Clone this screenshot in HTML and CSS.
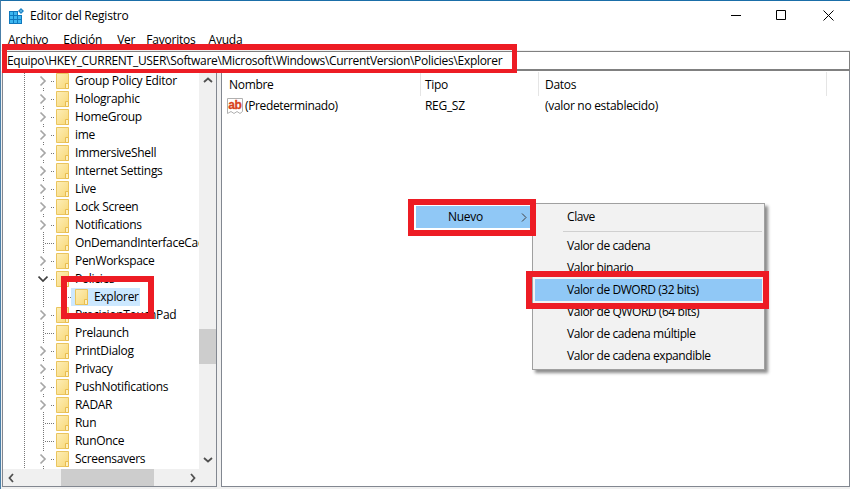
FILE: index.html
```html
<!DOCTYPE html>
<html lang="es">
<head>
<meta charset="utf-8">
<title>Editor del Registro</title>
<link rel="stylesheet" href="styles.css">
</head>
<body>
<svg class="defs" width="0" height="0">
  <linearGradient id="fg" x1="0" y1="0" x2="1" y2="1"><stop offset="0" stop-color="#fdeeb8"/><stop offset="1" stop-color="#f8d877"/></linearGradient>
  <symbol id="folder" viewBox="0 0 13 16">
    <path d="M.5 .5H12.500V15.500H.5Z" fill="url(#fg)" stroke="#eac55f"/>
    <path d="M9.500 10.500H12.500V15.500H9.500Z" fill="#fdf0c0" stroke="#e8bd50"/>
  </symbol>
  <symbol id="chev" viewBox="0 0 10 10">
    <path d="M2.500 .5L7 5L2.500 9.500" fill="none" stroke="#a6a6a6" stroke-width="1.700"/>
  </symbol>
  <symbol id="chevd" viewBox="0 0 10 10">
    <path d="M.5 2.500L5 7L9.500 2.500" fill="none" stroke="#404040" stroke-width="1.700"/>
  </symbol>
</svg>
<div class="window">
  <header class="titlebar">
    <svg class="appicon" width="16" height="16" viewBox="0 0 16 16">
      <path d="M0 3h13v13H0z" fill="#0f78bd"/>
      <path d="M1 4h3v3H1zM5 4h3v3H5zM1 8h3v3H1zM5 8h3v3H5zM9 8h3v3H9zM1 12h3v3H1zM5 12h3v3H5zM9 12h3v3H9z" fill="#3cb6f0"/>
      <path d="M9 3h4v4H9z" fill="#fff"/>
      <path d="M12 0l3 3-3 3-3-3z" fill="#1f86c8"/>
      <path d="M12 2l1 1-1 1-1-1z" fill="#8fd6f8"/>
    </svg>
    <span class="title">Editor del Registro</span>
    <div class="controls">
      <svg width="11" height="11" viewBox="0 0 11 11"><path d="M0 5.500H10" stroke="#000" fill="none"/></svg>
      <svg width="11" height="11" viewBox="0 0 11 11"><path d="M.5 .5H9.500V9.500H.5Z" stroke="#000" fill="none"/></svg>
      <svg width="11" height="11" viewBox="0 0 11 11"><path d="M.5 .5L10.500 10.500M10.500 .5L.5 10.500" stroke="#000" fill="none"/></svg>
    </div>
  </header>
  <nav class="menubar">
    <span>Archivo</span><span>Edición</span><span class="narrow">Ver</span><span class="fav">Favoritos</span><span>Ayuda</span>
  </nav>
  <div class="address">Equipo\HKEY_CURRENT_USER\Software\Microsoft\Windows\CurrentVersion\Policies\Explorer</div>
  <main class="panes">
    <section class="treepane">
      <div class="tree">
        <div class="row"><svg class="tw"><use href="#chev"/></svg><i class="dots"></i><svg class="fo"><use href="#folder"/></svg><span>Group Policy Editor</span></div>
        <div class="row"><svg class="tw"><use href="#chev"/></svg><i class="dots"></i><svg class="fo"><use href="#folder"/></svg><span>Holographic</span></div>
        <div class="row"><svg class="tw"><use href="#chev"/></svg><i class="dots"></i><svg class="fo"><use href="#folder"/></svg><span>HomeGroup</span></div>
        <div class="row"><svg class="tw"><use href="#chev"/></svg><i class="dots"></i><svg class="fo"><use href="#folder"/></svg><span>ime</span></div>
        <div class="row"><svg class="tw"><use href="#chev"/></svg><i class="dots"></i><svg class="fo"><use href="#folder"/></svg><span>ImmersiveShell</span></div>
        <div class="row"><svg class="tw"><use href="#chev"/></svg><i class="dots"></i><svg class="fo"><use href="#folder"/></svg><span>Internet Settings</span></div>
        <div class="row"><svg class="tw"><use href="#chev"/></svg><i class="dots"></i><svg class="fo"><use href="#folder"/></svg><span>Live</span></div>
        <div class="row"><svg class="tw"><use href="#chev"/></svg><i class="dots"></i><svg class="fo"><use href="#folder"/></svg><span>Lock Screen</span></div>
        <div class="row"><svg class="tw"><use href="#chev"/></svg><i class="dots"></i><svg class="fo"><use href="#folder"/></svg><span>Notifications</span></div>
        <div class="row leaf"><i class="tw"></i><i class="dots"></i><svg class="fo"><use href="#folder"/></svg><span class="clip">OnDemandInterfaceCac</span></div>
        <div class="row"><svg class="tw"><use href="#chev"/></svg><i class="dots"></i><svg class="fo"><use href="#folder"/></svg><span>PenWorkspace</span></div>
        <div class="row"><svg class="tw"><use href="#chevd"/></svg><i class="dots"></i><svg class="fo"><use href="#folder"/></svg><span>Policies</span></div>
        <div class="row child"><i class="dots"></i><div class="sel"><svg class="fo"><use href="#folder"/></svg><span>Explorer</span></div></div>
        <div class="row"><svg class="tw"><use href="#chev"/></svg><i class="dots"></i><svg class="fo"><use href="#folder"/></svg><span>PrecisionTouchPad</span></div>
        <div class="row leaf"><i class="tw"></i><i class="dots"></i><svg class="fo"><use href="#folder"/></svg><span>Prelaunch</span></div>
        <div class="row"><svg class="tw"><use href="#chev"/></svg><i class="dots"></i><svg class="fo"><use href="#folder"/></svg><span>PrintDialog</span></div>
        <div class="row"><svg class="tw"><use href="#chev"/></svg><i class="dots"></i><svg class="fo"><use href="#folder"/></svg><span>Privacy</span></div>
        <div class="row"><svg class="tw"><use href="#chev"/></svg><i class="dots"></i><svg class="fo"><use href="#folder"/></svg><span>PushNotifications</span></div>
        <div class="row"><svg class="tw"><use href="#chev"/></svg><i class="dots"></i><svg class="fo"><use href="#folder"/></svg><span>RADAR</span></div>
        <div class="row leaf"><i class="tw"></i><i class="dots"></i><svg class="fo"><use href="#folder"/></svg><span>Run</span></div>
        <div class="row leaf"><i class="tw"></i><i class="dots"></i><svg class="fo"><use href="#folder"/></svg><span>RunOnce</span></div>
        <div class="row"><svg class="tw"><use href="#chev"/></svg><i class="dots"></i><svg class="fo"><use href="#folder"/></svg><span>Screensavers</span></div>
        <div class="row"><i class="tw"></i><i class="dots"></i><svg class="fo"><use href="#folder"/></svg></div>
      </div>
      <div class="vscroll">
        <svg width="10" height="6" viewBox="0 0 10 6"><path d="M1 5L5 1.500L9 5" fill="none" stroke="#505050" stroke-width="1.800"/></svg>
        <div class="vtrack"><div class="vthumb"></div></div>
        <svg width="10" height="6" viewBox="0 0 10 6"><path d="M1 1L5 4.500L9 1" fill="none" stroke="#505050" stroke-width="1.800"/></svg>
      </div>
      <div class="hscroll">
        <svg width="6" height="10" viewBox="0 0 6 10"><path d="M5 1L1.500 5L5 9" fill="none" stroke="#505050" stroke-width="1.800"/></svg>
        <div class="hthumb"></div>
        <svg width="6" height="10" viewBox="0 0 6 10"><path d="M1 1L4.500 5L1 9" fill="none" stroke="#505050" stroke-width="1.800"/></svg>
      </div>
    </section>
    <section class="listpane">
      <div class="listhead">
        <span class="c1">Nombre</span><span class="c2">Tipo</span><span class="c3">Datos</span><i class="c4"></i>
      </div>
      <div class="listrow">
        <span class="c1 name">
          <svg width="17" height="17" viewBox="0 0 17 17">
            <path d="M.5 .5H15.500V13.500L13 15.500L10 13.500L7 15.500L4 13.500L.5 15.500Z" fill="#fff" stroke="#b0b0b0"/>
            <text x="1.200" y="11" class="ab">ab</text>
          </svg><span>(Predeterminado)</span>
        </span>
        <span class="c2">REG_SZ</span>
        <span class="c3">(valor no establecido)</span>
      </div>
    </section>
  </main>
</div>
<div class="menu">
  <div class="parent"><span>Nuevo</span><svg width="6" height="9" viewBox="0 0 6 9"><path d="M1 .5L5 4.500L1 8.500" fill="none" stroke="#404040"/></svg></div>
</div>
<div class="submenu">
  <div class="item">Clave</div>
  <div class="sep"></div>
  <div class="item">Valor de cadena</div>
  <div class="item">Valor binario</div>
  <div class="item active">Valor de DWORD (32 bits)</div>
  <div class="item">Valor de QWORD (64 bits)</div>
  <div class="item">Valor de cadena múltiple</div>
  <div class="item">Valor de cadena expandible</div>
</div>
<div class="mark mark-address"></div>
<div class="mark mark-explorer"></div>
<div class="mark mark-nuevo"></div>
<div class="mark mark-dword"></div>
</body>
</html>
```
FILE: styles.css
```css
* { box-sizing: border-box; }
html, body { margin: 0; padding: 0; }
body {
  width: 850px; height: 489px; overflow: hidden; position: relative;
  background: #fff; color: #000;
  font: 12px/18px "Open Sans", "Noto Sans", sans-serif;
}
span, .address { letter-spacing: -.3px; }
.item { letter-spacing: -.43px; }
.title, .menubar span { letter-spacing: -.22px; }
.defs { position: absolute; }
.window { width: 850px; height: 489px; display: flex; flex-direction: column; border-top: 1px solid #1a6ea8; border-left: 1px solid #4a7fa8; }
.titlebar { height: 29px; display: flex; align-items: center; padding-left: 8px; background: #fff; flex: none; }
.appicon { margin-right: 5px; }
.title { font-size: 12px; }
.controls { margin-left: auto; display: flex; gap: 36px; padding-right: 16px; align-items: center; }
.controls svg:first-child { margin-right: -2px; }
.menubar { height: 21px; display: flex; gap: 15px; padding-left: 7px; padding-top: 1px; background: #fff; flex: none; border-bottom: 1px solid #f0f0f0; }
.menubar .narrow { margin-right: -4px; }
.menubar .fav { margin-right: -2px; }
.address { height: 20px; margin-left: 1px; padding: 0 0 0 4px; border: 1px solid #808080; border-bottom-width: 2px; line-height: 17px; white-space: nowrap; flex: none; }
.panes { flex: 1; display: flex; gap: 4px; min-height: 0; background: #f0f0f0; padding-left: 1px; padding-bottom: 2px; }
.treepane { width: 215px; border: solid #828790; border-width: 0 1px 1px 1px; display: grid; grid-template-columns: 1fr 17px; grid-template-rows: 1fr 17px; min-height: 0; }
.tree {
  overflow: hidden; padding-top: 1px; background-color: #fff; min-width: 0;
  background-image: repeating-linear-gradient(#777 0 1px, transparent 1px 2px);
  background-size: 1px 100%; background-position: 21px 0; background-repeat: no-repeat;
}
.row {
  height: 18px; display: flex; align-items: center; padding-left: 35px; white-space: nowrap;
  background: repeating-linear-gradient(#777 0 1px, transparent 1px 2px) 40px 0 / 1px 100% no-repeat;
}
.tw { width: 10px; height: 10px; flex: none; }
svg.tw { height: 14px; background: #fff; }
.dots { width: 4px; height: 1px; margin: 0 0 0 3px; flex: none; background: repeating-linear-gradient(90deg, #777 0 1px, transparent 1px 2px); }
.leaf .dots { width: 10px; margin-left: -3px; }
.fo { width: 13px; height: 16px; margin-left: 1px; flex: none; }
.row > span { margin-left: 6px; }
.row.child { padding-left: 63px; }
.row.child .dots { margin: 0; width: 5px; }
.sel { display: flex; align-items: center; height: 18px; width: 69px; background: #cce8ff; padding-left: 3px; }
.sel > span { margin-left: 6px; }
.vscroll { background: #f0f0f0; display: flex; flex-direction: column; align-items: center; padding: 6px 0; justify-content: space-between; }
.vtrack { flex: 1; width: 100%; margin: 6px 0; display: flex; flex-direction: column; justify-content: flex-end; padding-bottom: 87px; }
.vthumb { height: 35px; background: #cdcdcd; width: 100%; }
.hscroll { grid-column: 1 / 3; background: #f0f0f0; display: flex; align-items: center; padding: 0 20px 0 5px; }
.hthumb { width: 93px; height: 17px; background: #cdcdcd; margin-left: 47px; margin-right: auto; }
.listpane { flex: 1; border: solid #828790; border-width: 0 1px 1px 1px; background: #fff; }
.listhead, .listrow { display: grid; grid-template-columns: 196px 120px 1fr; align-items: center; padding-left: 7px; }
.listhead { height: 25px; padding-top: 3px; position: relative; }
.listrow { height: 20px; }
.listhead span { position: relative; }
.c4 { position: absolute; left: 604px; top: 1px; height: 24px; width: 1px; background: #e5e5e5; }
.listhead .c1::after, .listhead .c2::after { content: ""; position: absolute; top: -4px; height: 24px; width: 1px; background: #e5e5e5; right: 4px; }
.listhead .c2::after { right: 6px; }
.name { display: flex; align-items: center; margin-left: -2px; gap: 1px; }
.name span { letter-spacing: -.37px; }
.ab { font: bold 12px "Liberation Sans", sans-serif; fill: #d8431a; stroke: #d8431a; stroke-width: .3px; letter-spacing: -.4px; }
.menu { position: absolute; left: 414px; top: 204px; width: 118px; height: 26px; padding: 2px; }
.parent { height: 22px; background: #90c8f6; display: flex; align-items: center; padding-left: 32px; justify-content: space-between; padding-right: 4px; width: 115px; }
.submenu { position: absolute; left: 532px; top: 203px; width: 233px; height: 167px; background: #f2f2f2; border: 1px solid #a0a0a0; padding: 2px; box-shadow: 3px 3px 3px rgba(0,0,0,.45); }
.item { height: 22px; line-height: 22px; padding-left: 32px; }
.item.active { background: #90c8f6; }
.sep { height: 1px; background: #d0d0d0; margin: 3px 0 3px 28px; }
.mark { position: absolute; border: 6px solid #ed1c24; pointer-events: none; }
.mark-address { left: 2px; top: 44px; width: 515px; height: 29px; border-width: 6px 5px 4px 5px; }
.mark-explorer { left: 61px; top: 276px; width: 93px; height: 43px; }
.mark-nuevo { left: 408px; top: 199px; width: 128px; height: 37px; }
.mark-dword { left: 526px; top: 271px; width: 243px; height: 38px; }
```
